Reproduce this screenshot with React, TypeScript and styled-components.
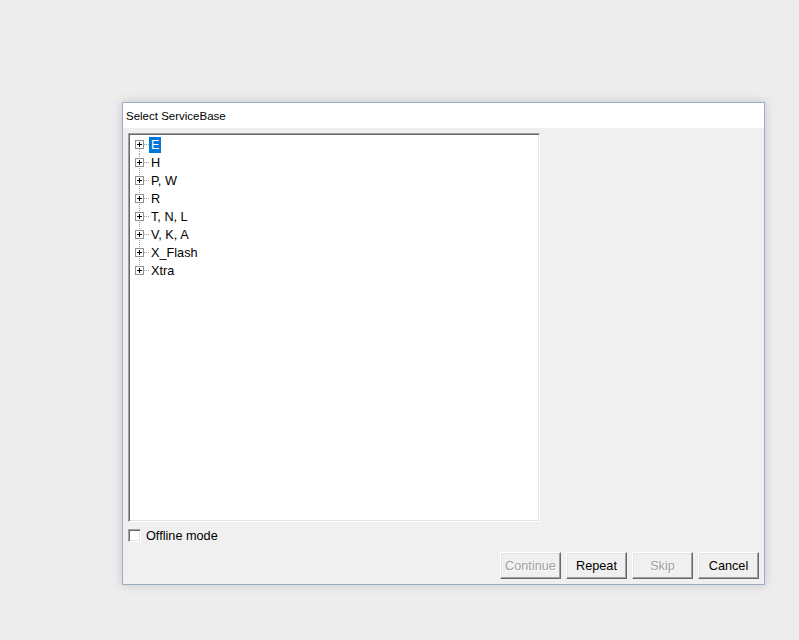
import { useState } from "react";
import styled, { createGlobalStyle } from "styled-components";

const Global = createGlobalStyle`
  html, body {
    margin: 0;
    padding: 0;
    background: #ededed;
  }
  body {
    font-family: "Liberation Sans", Arial, sans-serif;
  }
`;

const Desktop = styled.div`
  width: 799px;
  height: 640px;
  padding: 102px 0 0 122px;
  box-sizing: border-box;
`;

const Window = styled.div`
  width: 643px;
  height: 483px;
  box-sizing: border-box;
  border: 1px solid #9eabc6;
  background: #f0f0f0;
  box-shadow: 0 0 10px rgba(0, 0, 0, 0.16);
  display: flex;
  flex-direction: column;
`;

const TitleBar = styled.div`
  height: 25px;
  background: #fff;
  display: flex;
  align-items: center;
  padding-left: 3px;
  font-size: 11.5px;
  color: #000;
`;

const Body = styled.div`
  flex: 1;
  display: flex;
  flex-direction: column;
  padding: 5px 4px 5px 5px;
`;

const TreeBox = styled.div`
  width: 412px;
  height: 389px;
  box-sizing: border-box;
  background: #fff;
  border: 1px solid;
  border-color: #a0a0a0 #fff #fff #a0a0a0;
  box-shadow: inset 1px 1px 0 #696969, inset -1px -1px 0 #e3e3e3;
  padding: 2px 0 0 1px;
`;

const Row = styled.div`
  height: 18px;
  display: flex;
  align-items: center;
`;

const Label = styled.span<{ $selected?: boolean }>`
  font-size: 12.7px;
  line-height: 16px;
  padding: 0 2px;
  color: ${(p) => (p.$selected ? "#fff" : "#000")};
  background: ${(p) => (p.$selected ? "#0078d7" : "transparent")};
`;

const OptionRow = styled.label`
  margin-top: 7px;
  height: 13px;
  display: flex;
  align-items: center;
  gap: 5px;
  font-size: 12.7px;
`;

const Check = styled.span`
  width: 13px;
  height: 13px;
  box-sizing: border-box;
  background: #fff;
  border: 1px solid;
  border-color: #a0a0a0 #fff #fff #a0a0a0;
  box-shadow: inset 1px 1px 0 #696969, inset -1px -1px 0 #e3e3e3;
`;

const Buttons = styled.div`
  margin-top: 10px;
  display: flex;
  justify-content: flex-end;
  gap: 5px;
  padding-right: 1px;
`;

const Button = styled.button<{ $disabled?: boolean }>`
  width: 61px;
  height: 27px;
  box-sizing: border-box;
  padding: 0;
  font-family: "Liberation Sans", Arial, sans-serif;
  font-size: 12.7px;
  background: #f0f0f0;
  border: 1px solid;
  border-color: #fff #696969 #696969 #fff;
  box-shadow: inset -1px -1px 0 #a0a0a0, inset 1px 1px 0 #e3e3e3;
  color: ${(p) => (p.$disabled ? "#a0a0a0" : "#000")};
  text-shadow: ${(p) => (p.$disabled ? "1px 1px 0 #fff" : "none")};
`;

function Expander({ first, last }: { first: boolean; last: boolean }) {
  return (
    <svg width="19" height="18" viewBox="0 0 19 18" shapeRendering="crispEdges">
      <line
        x1="9.5"
        y1={first ? 9 : 0}
        x2="9.5"
        y2={last ? 9 : 18}
        stroke="#a0a0a0"
        strokeDasharray="1 1"
      />
      <line x1="14" y1="8.5" x2="19" y2="8.5" stroke="#a0a0a0" strokeDasharray="1 1" />
      <rect x="5.5" y="4.5" width="8" height="8" fill="#fff" stroke="#919191" />
      <line x1="7" y1="8.5" x2="12" y2="8.5" stroke="#000" />
      <line x1="9.5" y1="6" x2="9.5" y2="11" stroke="#000" />
    </svg>
  );
}

const nodes = ["E", "H", "P, W", "R", "T, N, L", "V, K, A", "X_Flash", "Xtra"];

export default function App() {
  const [selected, setSelected] = useState("E");
  return (
    <>
      <Global />
      <Desktop>
        <Window>
          <TitleBar>Select ServiceBase</TitleBar>
          <Body>
            <TreeBox>
              {nodes.map((n, i) => (
                <Row key={n} onClick={() => setSelected(n)}>
                  <Expander first={i === 0} last={i === nodes.length - 1} />
                  <Label $selected={selected === n}>{n}</Label>
                </Row>
              ))}
            </TreeBox>
            <OptionRow>
              <Check />
              Offline mode
            </OptionRow>
            <Buttons>
              <Button $disabled>Continue</Button>
              <Button>Repeat</Button>
              <Button $disabled>Skip</Button>
              <Button>Cancel</Button>
            </Buttons>
          </Body>
        </Window>
      </Desktop>
    </>
  );
}
